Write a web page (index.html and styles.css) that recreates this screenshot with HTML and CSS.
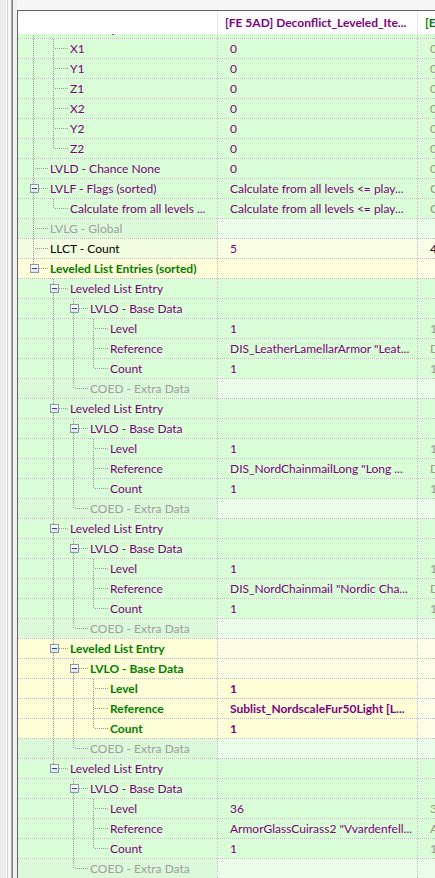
FILE: index.html
```html
<!DOCTYPE html>
<html>
<head>
<meta charset="utf-8">
<link rel="stylesheet" href="styles.css">
</head>
<body>
<div class="frame">
  <div class="side"></div>
  <div class="main">
    <div class="topbar"></div>
    <div class="view">
      <div class="hdr">
        <div class="h1"></div>
        <div class="h2">[FE 5AD] Deconflict_Leveled_Ite...</div>
        <div class="h3">[E</div>
      </div>
      <div class="rows">
        <div class="row partial"><div class="c1"><span class="i t"><span class="bx"></span></span><span class="lbl pu">OBND - Object Bounds</span></div><div class="c2"></div><div class="c3"></div></div>
        <div class="row"><div class="c1"><span class="i p"></span><span class="i t"></span><span class="lbl pu">X1</span></div><div class="c2 pu">0</div><div class="c3">0</div></div>
        <div class="row"><div class="c1"><span class="i p"></span><span class="i t"></span><span class="lbl pu">Y1</span></div><div class="c2 pu">0</div><div class="c3">0</div></div>
        <div class="row"><div class="c1"><span class="i p"></span><span class="i t"></span><span class="lbl pu">Z1</span></div><div class="c2 pu">0</div><div class="c3">0</div></div>
        <div class="row"><div class="c1"><span class="i p"></span><span class="i t"></span><span class="lbl pu">X2</span></div><div class="c2 pu">0</div><div class="c3">0</div></div>
        <div class="row"><div class="c1"><span class="i p"></span><span class="i t"></span><span class="lbl pu">Y2</span></div><div class="c2 pu">0</div><div class="c3">0</div></div>
        <div class="row"><div class="c1"><span class="i p"></span><span class="i c"></span><span class="lbl pu">Z2</span></div><div class="c2 pu">0</div><div class="c3">0</div></div>
        <div class="row"><div class="c1"><span class="i t"></span><span class="lbl pu">LVLD - Chance None</span></div><div class="c2 pu">0</div><div class="c3">0</div></div>
        <div class="row"><div class="c1"><span class="i t"><span class="bx"></span></span><span class="lbl pu">LVLF - Flags (sorted)</span></div><div class="c2 pu">Calculate from all levels &lt;= play...</div><div class="c3">C</div></div>
        <div class="row"><div class="c1"><span class="i p"></span><span class="i c"></span><span class="lbl pu">Calculate from all levels ...</span></div><div class="c2 pu">Calculate from all levels &lt;= play...</div><div class="c3">C</div></div>
        <div class="row miss"><div class="c1"><span class="i t"></span><span class="lbl gr">LVLG - Global</span></div><div class="c2"></div><div class="c3"></div></div>
        <div class="row cnt"><div class="c1"><span class="i t"></span><span class="lbl bk">LLCT - Count</span></div><div class="c2 pu">5</div><div class="c3 bk">4</div></div>
        <div class="row ents"><div class="c1"><span class="i c"><span class="bx"></span></span><span class="lbl gn b">Leveled List Entries (sorted)</span></div><div class="c2"></div><div class="c3"></div></div>

        <div class="row"><div class="c1"><span class="i n"></span><span class="i t"><span class="bx"></span></span><span class="lbl pu">Leveled List Entry</span></div><div class="c2"></div><div class="c3"></div></div>
        <div class="row"><div class="c1"><span class="i n"></span><span class="i p"></span><span class="i t"><span class="bx"></span></span><span class="lbl pu">LVLO - Base Data</span></div><div class="c2"></div><div class="c3"></div></div>
        <div class="row"><div class="c1"><span class="i n"></span><span class="i p"></span><span class="i p"></span><span class="i t"></span><span class="lbl pu">Level</span></div><div class="c2 pu">1</div><div class="c3">1</div></div>
        <div class="row"><div class="c1"><span class="i n"></span><span class="i p"></span><span class="i p"></span><span class="i t"></span><span class="lbl pu">Reference</span></div><div class="c2 pu">DIS_LeatherLamellarArmor "Leat...</div><div class="c3">D</div></div>
        <div class="row"><div class="c1"><span class="i n"></span><span class="i p"></span><span class="i p"></span><span class="i c"></span><span class="lbl pu">Count</span></div><div class="c2 pu">1</div><div class="c3">1</div></div>
        <div class="row miss"><div class="c1"><span class="i n"></span><span class="i p"></span><span class="i c"></span><span class="lbl gr">COED - Extra Data</span></div><div class="c2"></div><div class="c3"></div></div>

        <div class="row"><div class="c1"><span class="i n"></span><span class="i t"><span class="bx"></span></span><span class="lbl pu">Leveled List Entry</span></div><div class="c2"></div><div class="c3"></div></div>
        <div class="row"><div class="c1"><span class="i n"></span><span class="i p"></span><span class="i t"><span class="bx"></span></span><span class="lbl pu">LVLO - Base Data</span></div><div class="c2"></div><div class="c3"></div></div>
        <div class="row"><div class="c1"><span class="i n"></span><span class="i p"></span><span class="i p"></span><span class="i t"></span><span class="lbl pu">Level</span></div><div class="c2 pu">1</div><div class="c3">1</div></div>
        <div class="row"><div class="c1"><span class="i n"></span><span class="i p"></span><span class="i p"></span><span class="i t"></span><span class="lbl pu">Reference</span></div><div class="c2 pu">DIS_NordChainmailLong "Long ...</div><div class="c3">D</div></div>
        <div class="row"><div class="c1"><span class="i n"></span><span class="i p"></span><span class="i p"></span><span class="i c"></span><span class="lbl pu">Count</span></div><div class="c2 pu">1</div><div class="c3">1</div></div>
        <div class="row miss"><div class="c1"><span class="i n"></span><span class="i p"></span><span class="i c"></span><span class="lbl gr">COED - Extra Data</span></div><div class="c2"></div><div class="c3"></div></div>

        <div class="row"><div class="c1"><span class="i n"></span><span class="i t"><span class="bx"></span></span><span class="lbl pu">Leveled List Entry</span></div><div class="c2"></div><div class="c3"></div></div>
        <div class="row"><div class="c1"><span class="i n"></span><span class="i p"></span><span class="i t"><span class="bx"></span></span><span class="lbl pu">LVLO - Base Data</span></div><div class="c2"></div><div class="c3"></div></div>
        <div class="row"><div class="c1"><span class="i n"></span><span class="i p"></span><span class="i p"></span><span class="i t"></span><span class="lbl pu">Level</span></div><div class="c2 pu">1</div><div class="c3">1</div></div>
        <div class="row"><div class="c1"><span class="i n"></span><span class="i p"></span><span class="i p"></span><span class="i t"></span><span class="lbl pu">Reference</span></div><div class="c2 pu">DIS_NordChainmail "Nordic Cha...</div><div class="c3">D</div></div>
        <div class="row"><div class="c1"><span class="i n"></span><span class="i p"></span><span class="i p"></span><span class="i c"></span><span class="lbl pu">Count</span></div><div class="c2 pu">1</div><div class="c3">1</div></div>
        <div class="row miss"><div class="c1"><span class="i n"></span><span class="i p"></span><span class="i c"></span><span class="lbl gr">COED - Extra Data</span></div><div class="c2"></div><div class="c3"></div></div>

        <div class="row yel e"><div class="c1"><span class="i n"></span><span class="i t"><span class="bx"></span></span><span class="lbl gn b">Leveled List Entry</span></div><div class="c2"></div><div class="c3"></div></div>
        <div class="row yel e"><div class="c1"><span class="i n"></span><span class="i p"></span><span class="i t"><span class="bx"></span></span><span class="lbl gn b">LVLO - Base Data</span></div><div class="c2"></div><div class="c3"></div></div>
        <div class="row yel"><div class="c1"><span class="i n"></span><span class="i p"></span><span class="i p"></span><span class="i t"></span><span class="lbl gn b">Level</span></div><div class="c2 pu b">1</div><div class="c3"></div></div>
        <div class="row yel"><div class="c1"><span class="i n"></span><span class="i p"></span><span class="i p"></span><span class="i t"></span><span class="lbl gn b">Reference</span></div><div class="c2 pu b">Sublist_NordscaleFur50Light [L...</div><div class="c3"></div></div>
        <div class="row yel"><div class="c1"><span class="i n"></span><span class="i p"></span><span class="i p"></span><span class="i c"></span><span class="lbl gn b">Count</span></div><div class="c2 pu b">1</div><div class="c3"></div></div>
        <div class="row miss"><div class="c1"><span class="i n"></span><span class="i p"></span><span class="i c"></span><span class="lbl gr">COED - Extra Data</span></div><div class="c2"></div><div class="c3"></div></div>

        <div class="row"><div class="c1"><span class="i n"></span><span class="i c"><span class="bx"></span></span><span class="lbl pu">Leveled List Entry</span></div><div class="c2"></div><div class="c3"></div></div>
        <div class="row"><div class="c1"><span class="i n"></span><span class="i n"></span><span class="i t"><span class="bx"></span></span><span class="lbl pu">LVLO - Base Data</span></div><div class="c2"></div><div class="c3"></div></div>
        <div class="row"><div class="c1"><span class="i n"></span><span class="i n"></span><span class="i p"></span><span class="i t"></span><span class="lbl pu">Level</span></div><div class="c2 pu">36</div><div class="c3">3</div></div>
        <div class="row"><div class="c1"><span class="i n"></span><span class="i n"></span><span class="i p"></span><span class="i t"></span><span class="lbl pu">Reference</span></div><div class="c2 pu">ArmorGlassCuirass2 "Vvardenfell...</div><div class="c3">A</div></div>
        <div class="row"><div class="c1"><span class="i n"></span><span class="i n"></span><span class="i p"></span><span class="i c"></span><span class="lbl pu">Count</span></div><div class="c2 pu">1</div><div class="c3">1</div></div>
        <div class="row miss"><div class="c1"><span class="i n"></span><span class="i n"></span><span class="i c"></span><span class="lbl gr">COED - Extra Data</span></div><div class="c2"></div><div class="c3"></div></div>
      </div>
    </div>
  </div>
</div>
</body>
</html>
```
FILE: styles.css
```css
html, body {
  margin: 0;
  padding: 0;
}
body {
  width: 435px;
  height: 878px;
  overflow: hidden;
  background: #f0f0f0;
  font-family: Lato, "Open Sans", sans-serif;
  font-size: 12px;
}
.frame {
  display: flex;
  height: 878px;
}
.side {
  width: 17px;
  flex: none;
  background: linear-gradient(to right, #ececec 0 6px, #fbfbfb 6px 7px, #d2d2d2 7px 8px, #f6f6f6 8px 11px, #a8a8a8 11px 12px, #828282 12px 13px, #f0f0f0 13px 17px);
}
.main {
  flex: 1;
  min-width: 0;
  display: flex;
  flex-direction: column;
}
.topbar {
  height: 10px;
  flex: none;
  background: #f7f7f7;
}
.view {
  flex: 1;
  min-height: 0;
  display: flex;
  flex-direction: column;
  border-top: 1px solid #646464;
  border-left: 1px solid #646464;
  background: #fff;
  overflow: hidden;
}
.hdr {
  display: flex;
  height: 23px;
  flex: none;
  background: #fff;
  position: relative;
  z-index: 1;
}
.h1, .h2, .h3 {
  box-sizing: border-box;
  flex: none;
  width: 200px;
  line-height: 23px;
  white-space: nowrap;
  overflow: hidden;
  font-weight: bold;
}
.h1, .h2 {
  border-right: 1px solid #e5e5e5;
}
.h2 {
  padding-left: 7px;
  color: #800080;
}
.h3 {
  padding-left: 7px;
  color: #008000;
}
.rows {
  flex: 1;
  min-height: 0;
  overflow: hidden;
}
.row {
  --b1: #d9fdd6;
  --b2: #d9fdd6;
  --b3: #d9fdd6;
  display: flex;
  height: 20px;
}
.row.partial {
  margin-top: -15px;
}
.row.miss {
  --b1: #dbf9d9;
  --b2: #ebfeea;
  --b3: #ebfeea;
}
.row.cnt {
  --b1: #f2fcde;
  --b2: #f9fde3;
  --b3: #fafde6;
}
.row.ents {
  --b1: #fffed9;
  --b2: #fffed9;
  --b3: #fffee6;
}
.row.yel {
  --b1: #fefed7;
  --b2: #fefed7;
  --b3: #fefee8;
}
.row.yel.e {
  --b2: #fdfde3;
}
.c1, .c2, .c3 {
  box-sizing: border-box;
  flex: none;
  width: 200px;
  height: 20px;
  line-height: 19px;
  white-space: nowrap;
  overflow: hidden;
  padding-left: 12px;
}
.c1 {
  display: flex;
  background:
    repeating-linear-gradient(to right, #bcbcbc 0 1px, #ffffff 1px 2px) 0 100% / 100% 1px no-repeat,
    repeating-linear-gradient(to bottom, #bcbcbc 0 1px, #ffffff 1px 2px) 100% 0 / 1px 100% no-repeat,
    var(--b1);
}
.c2 {
  background:
    repeating-linear-gradient(to right, #bcbcbc 0 1px, #ffffff 1px 2px) 0 100% / 100% 1px no-repeat,
    repeating-linear-gradient(to bottom, #bcbcbc 0 1px, #ffffff 1px 2px) 100% 0 / 1px 100% no-repeat,
    var(--b2);
}
.c3 {
  color: #9c9884;
  background:
    repeating-linear-gradient(to right, #bcbcbc 0 1px, #ffffff 1px 2px) 0 100% / 100% 1px no-repeat,
    var(--b3);
}
.i {
  flex: none;
  width: 20px;
  height: 20px;
  display: flex;
  align-items: flex-start;
}
.i.p {
  background: repeating-linear-gradient(to bottom, #9a9a9a 0 1px, transparent 1px 2px) 3px 0 / 1px 20px no-repeat;
}
.i.t {
  background:
    repeating-linear-gradient(to bottom, #9a9a9a 0 1px, transparent 1px 2px) 3px 0 / 1px 20px no-repeat,
    repeating-linear-gradient(to right, #9a9a9a 0 1px, transparent 1px 2px) 5px 9px / 13px 1px no-repeat;
}
.i.c {
  background:
    repeating-linear-gradient(to bottom, #9a9a9a 0 1px, transparent 1px 2px) 3px 0 / 1px 10px no-repeat,
    repeating-linear-gradient(to right, #9a9a9a 0 1px, transparent 1px 2px) 5px 9px / 13px 1px no-repeat;
}
.bx {
  box-sizing: border-box;
  width: 9px;
  height: 9px;
  margin-top: 5px;
  border: 1px solid #8e99a8;
  background: linear-gradient(#ffffff, #dde2e8);
  display: flex;
  align-items: center;
  justify-content: center;
}
.bx::before {
  content: "";
  width: 5px;
  height: 1px;
  background: #2a478c;
}
.lbl {
  line-height: 19px;
  white-space: nowrap;
}
.pu { color: #800080; }
.gr { color: #a0a0a0; }
.bk { color: #000000; }
.gn { color: #008000; }
.c3.bk { color: #101030; }
.b { font-weight: bold; }
```
